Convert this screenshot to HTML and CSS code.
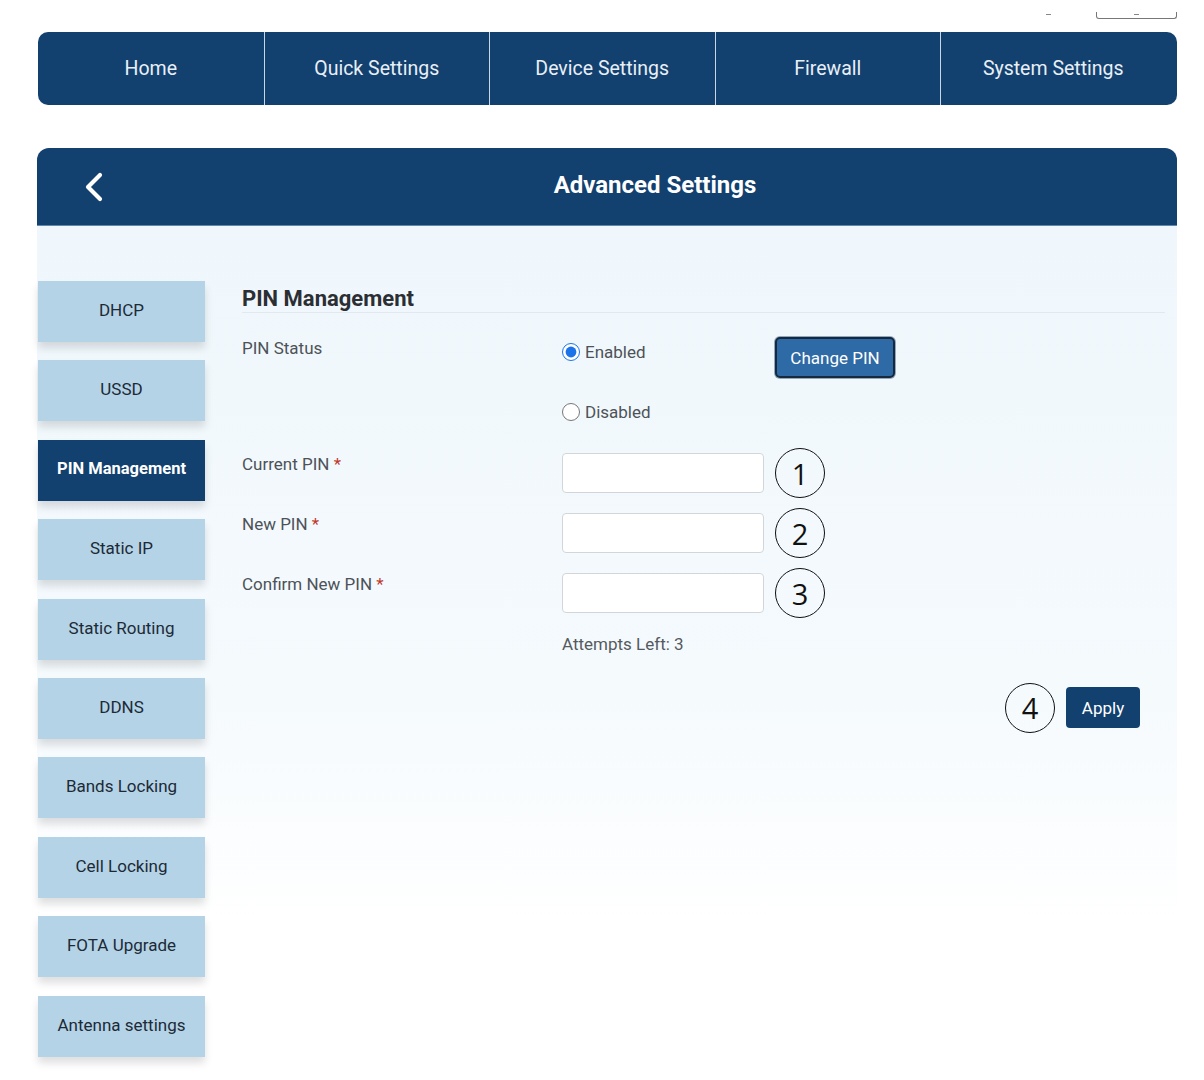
FILE: index.html
```html
<!DOCTYPE html>
<html lang="en">
<head>
    <meta charset="UTF-8">
    <meta name="viewport" content="width=device-width, initial-scale=1.0">
    <title>Advanced Settings - PIN Management</title>
    <link rel="stylesheet" href="styles.css">
</head>
<body>
    <div class="page">
        <!-- TOP STRIP (cut off language box) -->
        <div class="top-strip">
            <span class="tick"></span>
            <span class="lang-box"><span class="tick"></span></span>
        </div>

        <!-- MAIN NAVIGATION -->
        <nav class="main-nav">
            <a href="#">Home</a>
            <a href="#">Quick Settings</a>
            <a href="#">Device Settings</a>
            <a href="#">Firewall</a>
            <a href="#">System Settings</a>
        </nav>

        <!-- ADVANCED SETTINGS PANEL -->
        <section class="panel">
            <header class="panel-head">
                <a href="#" class="back-link">
                    <svg width="22" height="32" viewBox="0 0 22 32">
                        <path d="M17 4 L5 16 L17 28" fill="none" stroke="#ffffff" stroke-width="4.2" stroke-linecap="round" stroke-linejoin="round"/>
                    </svg>
                </a>
                <h1>Advanced Settings</h1>
            </header>

            <div class="panel-body">
                <ul class="side-menu">
                    <li>DHCP</li>
                    <li>USSD</li>
                    <li class="active">PIN Management</li>
                    <li>Static IP</li>
                    <li>Static Routing</li>
                    <li>DDNS</li>
                    <li>Bands Locking</li>
                    <li>Cell Locking</li>
                    <li>FOTA Upgrade</li>
                    <li>Antenna settings</li>
                </ul>

                <div class="content">
                    <h2 class="section-title">PIN Management</h2>

                    <div class="status-row">
                        <div class="field-label">PIN Status</div>
                        <div class="status-options">
                            <div class="option-line">
                                <label class="radio-label">
                                    <input type="radio" name="pinStatus" checked> Enabled
                                </label>
                                <button class="change-btn">Change PIN</button>
                            </div>
                            <div class="option-line second">
                                <label class="radio-label">
                                    <input type="radio" name="pinStatus"> Disabled
                                </label>
                            </div>
                        </div>
                    </div>

                    <div class="field-row first">
                        <div class="field-label">Current PIN <span class="req">*</span></div>
                        <input type="password" class="pin-input">
                        <span class="mark">1</span>
                    </div>
                    <div class="field-row">
                        <div class="field-label">New PIN <span class="req">*</span></div>
                        <input type="password" class="pin-input">
                        <span class="mark">2</span>
                    </div>
                    <div class="field-row">
                        <div class="field-label">Confirm New PIN <span class="req">*</span></div>
                        <input type="password" class="pin-input">
                        <span class="mark">3</span>
                    </div>

                    <p class="attempts">Attempts Left: 3</p>

                    <div class="apply-row">
                        <span class="mark">4</span>
                        <button class="apply-btn">Apply</button>
                    </div>
                </div>
            </div>
        </section>
    </div>
</body>
</html>
```

FILE: styles.css
```css
/* General */
body {
    margin: 0;
    background: #ffffff;
    font-family: Roboto, "Liberation Sans", sans-serif;
    color: #333;
}

.page {
    padding: 0 27px 0 37px;
}

/* Top strip */
.top-strip {
    height: 32px;
    display: flex;
    justify-content: flex-end;
    align-items: flex-start;
}

.top-strip .tick {
    display: block;
    width: 5px;
    height: 1px;
    background: #888;
    margin: 14px 45px 0 0;
}

.lang-box {
    width: 79px;
    height: 6px;
    margin-top: 12px;
    border: 1px solid #777;
    border-top: none;
    border-radius: 0 0 3px 3px;
    display: flex;
    justify-content: center;
}

.lang-box .tick {
    margin: 2px 0 0 0;
}

/* Main nav */
.main-nav {
    margin-left: 1px;
    height: 73px;
    background: #12406f;
    border-radius: 10px;
    display: grid;
    grid-template-columns: repeat(5, 225.5px);
    overflow: hidden;
}

.main-nav a {
    display: flex;
    align-items: center;
    justify-content: center;
    color: #e9eff6;
    text-decoration: none;
    font-size: 19.5px;
    border-left: 1px solid #c9d6e4;
}

.main-nav a:first-child {
    border-left: none;
}

/* Panel */
.panel {
    margin-top: 43px;
    width: 1140px;
}

.panel-head {
    box-sizing: border-box;
    height: 78px;
    background: #12406f;
    border-radius: 12px 12px 0 0;
    border-bottom: 1px solid #5f86ad;
    display: flex;
    align-items: center;
}

.back-link {
    width: 96px;
    box-sizing: border-box;
    padding-left: 46px;
    display: flex;
    align-items: center;
}

.panel-head h1 {
    flex: 1;
    margin: 0;
    text-align: center;
    color: #ffffff;
    font-size: 24px;
    font-weight: 700;
    padding-bottom: 3px;
}

.panel-body {
    display: flex;
    padding: 55px 12px 24px 1px;
    background: linear-gradient(#eff7fc, #f5fafd 55%, #ffffff 82%);
}

/* Side menu */
.side-menu {
    list-style: none;
    margin: 0;
    padding: 0;
    width: 167px;
    display: flex;
    flex-direction: column;
    gap: 18.4px;
}

.side-menu li {
    height: 61px;
    padding-bottom: 3px;
    box-sizing: border-box;
    display: flex;
    align-items: center;
    justify-content: center;
    background: #b4d3e7;
    color: #1d2a36;
    font-size: 17px;
    box-shadow: 0 6px 8px rgba(0, 0, 0, 0.13);
    cursor: pointer;
}

.side-menu li.active {
    background: #12406f;
    color: #ffffff;
    font-weight: 700;
    font-size: 16.5px;
}

/* Content */
.content {
    flex: 1;
    margin-left: 37px;
}

.section-title {
    margin: 5px 0 0 0;
    font-size: 22px;
    line-height: 26px;
    font-weight: 700;
    color: #2b2f33;
    border-bottom: 1px solid #e2e8ee;
}

.field-label {
    width: 320px;
    flex-shrink: 0;
    padding-top: 1px;
    font-size: 17px;
    line-height: 20px;
    color: #4d5258;
}

.req {
    color: #c0392b;
}

.status-row {
    display: flex;
    margin-top: 24px;
}

.option-line {
    display: flex;
    align-items: flex-start;
}

.option-line.second {
    margin-top: 24px;
}

.radio-label {
    width: 213px;
    margin-top: 5px;
    display: flex;
    align-items: center;
    font-size: 17px;
    line-height: 20px;
    color: #4d5258;
}

.option-line.second .radio-label {
    margin-top: 0;
}

.radio-label input {
    width: 18px;
    height: 18px;
    margin: 0 5px 0 0;
    accent-color: #1a73e8;
}

.change-btn {
    width: 120px;
    height: 41px;
    background: #2e6aa5;
    color: #ffffff;
    font-family: inherit;
    font-size: 17px;
    border: 2px solid #17293d;
    border-radius: 5px;
    box-shadow: 0 0 0 1px #94a8bd;
    cursor: pointer;
}

.field-row {
    display: flex;
    align-items: center;
    margin-top: 20px;
}

.field-row.first {
    margin-top: 31px;
}

.field-row .field-label {
    align-self: flex-start;
}

.pin-input {
    box-sizing: border-box;
    width: 202px;
    height: 40px;
    border: 1px solid #d3d6d9;
    border-radius: 4px;
    background: #ffffff;
}

/* Annotation marks */
.mark {
    box-sizing: border-box;
    width: 50px;
    height: 50px;
    margin: -5px 0 -5px 11px;
    border: 1.5px solid #111;
    border-radius: 50%;
    display: flex;
    align-items: center;
    justify-content: center;
    font-family: "Open Sans", sans-serif;
    font-size: 29px;
    color: #111;
}

.attempts {
    margin: 21px 0 0 320px;
    font-size: 17px;
    line-height: 20px;
    color: #555a60;
}

.apply-row {
    display: flex;
    justify-content: flex-end;
    align-items: center;
    margin: 33px 25px 0 0;
}

.apply-row .mark {
    margin: -5px 11px -5px 0;
}

.apply-btn {
    width: 74px;
    height: 41px;
    background: #12406f;
    color: #ffffff;
    font-family: inherit;
    font-size: 17px;
    border: none;
    border-radius: 4px;
    cursor: pointer;
}
```
